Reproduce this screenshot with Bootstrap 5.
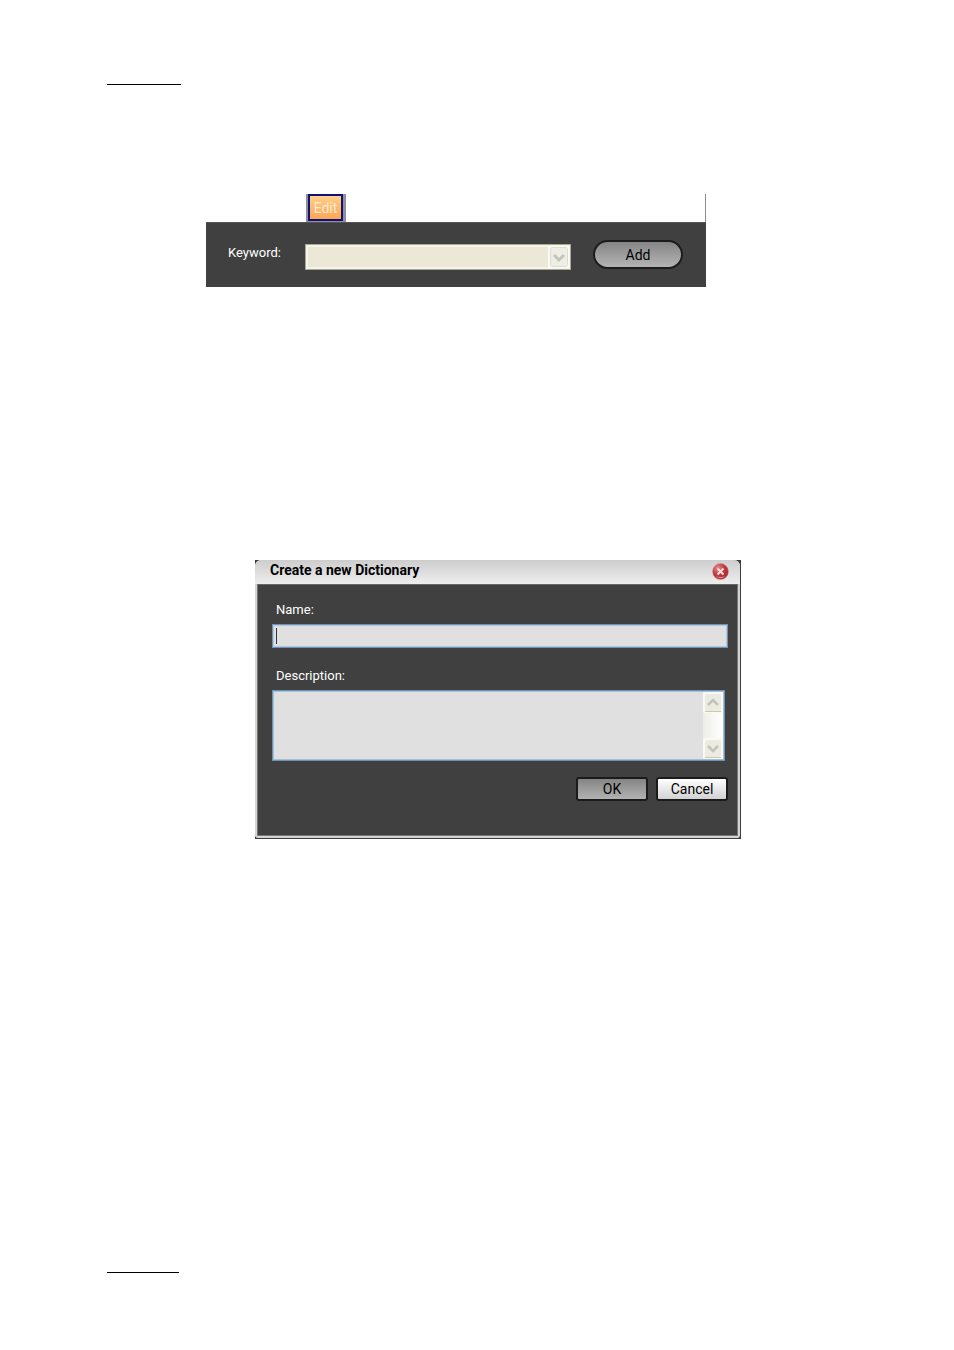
<!DOCTYPE html>
<html lang="en">
<head>
<meta charset="utf-8">
<meta name="viewport" content="width=device-width, initial-scale=1">
<title>Create a new Dictionary</title>
<link href="https://cdn.jsdelivr.net/npm/bootstrap@5.3.0/dist/css/bootstrap.min.css" rel="stylesheet">
<style>
body { background: #fff; color: #000; font-family: Roboto, "Liberation Sans", sans-serif; font-size: 13px; line-height: 16px; }
.sheet { padding: 84px 107px 77px; }
.rule { height: 1px; background: #000; }
.rule-top { width: 74px; }
.rule-bottom { width: 72px; }

/* keyword strip */
.keyword-panel { max-width: 500px; margin: 109px 0 0 99px; }
.strip { height: 28px; padding-left: 100px; border-right: 1px solid #8c8c8c; }
.edit-cell { width: 40px; border: solid #8e9199; border-width: 0 3px 1px 2px; }
.edit-btn { border: 2px solid #10107c; background: linear-gradient(#ffd08c, #ffa552); color: #fbe9d6; font-size: 14px; line-height: 16px; }
.keyword-bar { height: 65px; padding: 17px 23px 0 22px; background: #404040; border-top: 1px solid #555; }
.keyword-label { width: 77px; padding-top: 5px; color: #fff; }
.keyword-select { margin-top: 4px; height: 26px; }
.keyword-select select { appearance: none; border: 1px solid #a9aa95; background: #ebe8d7; box-shadow: inset 0 0 0 2px #f6f4ea; opacity: 1; }
.combo-arrow { top: 2px; right: 1px; width: 22px; height: 22px; }
.add-btn { width: 90px; height: 29px; margin-left: 22px; border: 2px solid #1c1c1c; border-radius: 15px; background: linear-gradient(#858585, #b4b4b4); font-size: 14px; }

/* dialog */
.dialog-frame { max-width: 486px; margin: 273px 0 0 148px; background: #3c3c3c; padding: 0 1px 1px 0; }
.dialog-box { border-radius: 6px 6px 3px 3px; background: #d4d4d4; padding: 0 2px 2px; }
.title-bar { height: 24px; margin: 0 -2px; padding: 2px 11px 0 15px; border-radius: 6px 6px 0 0; background: linear-gradient(#cdcdcd, #eee); }
.title-text { font-size: 14px; line-height: 17px; font-weight: 700; }
.close-btn { width: 17px; height: 17px; margin-top: 1px; }
.dialog-content { padding: 17px 9px 34px 14px; background: #404040; border: 1px solid #777; border-top-color: #666; }
.field-label { padding-left: 4px; margin-bottom: 6px; color: #fff; line-height: 16px; }
.name-input { height: 24px; padding: 2px 8px; border: 1px solid #6f93b5; outline: 0; background: #e0e0e0; box-shadow: inset 0 0 0 1px #b3c8dc; }
.text-caret { left: 4px; top: 4px; width: 1px; height: 16px; background: #333; }
.desc-label { margin-top: 20px; }
.desc-wrap { height: 71px; margin-right: 3px; padding: 1px; border: 1px solid #6f93b5; background: #e0e0e0; box-shadow: inset 0 0 0 1px #a4bfd9; }
.desc-wrap textarea { resize: none; outline: 0; overflow: hidden; }
.scroll-track { width: 20px; background: linear-gradient(90deg, #eeeee6, #fff); }
.scroll-btn { width: 20px; height: 21px; }
.dialog-btn { width: 72px; height: 24px; border: 2px solid #1b1b1b; border-radius: 3px; font-size: 14px; line-height: 16px; }
.ok-btn { background: linear-gradient(#858585, #b2b2b2); }
.cancel-btn { background: linear-gradient(#fff, #d2d2d2); }
</style>
</head>
<body>
<div class="sheet d-flex flex-column min-vh-100">
  <div class="rule rule-top"></div>

  <section class="keyword-panel">
    <div class="strip d-flex">
      <div class="edit-cell d-flex">
        <button type="button" class="edit-btn w-100 p-0">Edit</button>
      </div>
    </div>
    <div class="keyword-bar d-flex align-items-start">
      <label class="keyword-label" for="keyword">Keyword:</label>
      <div class="keyword-select position-relative flex-grow-1">
        <select id="keyword" class="w-100 h-100 rounded-0" disabled></select>
        <svg class="combo-arrow position-absolute pe-none" viewBox="0 0 22 22" aria-hidden="true">
          <rect width="22" height="22" fill="#faf9f3"/>
          <rect x="2.500" y="1.500" width="17" height="19" rx="2" fill="#efeee6" stroke="#dddccf"/>
          <path d="M6 9l5 5l5-5" fill="none" stroke="#c5c5ba" stroke-width="3"/>
        </svg>
      </div>
      <button type="button" class="add-btn p-0">Add</button>
    </div>
  </section>

  <section class="dialog-frame" role="dialog" aria-labelledby="dialog-title">
    <div class="dialog-box">
      <div class="title-bar d-flex justify-content-between align-items-start">
        <h1 id="dialog-title" class="title-text m-0">Create a new Dictionary</h1>
        <button type="button" class="close-btn border-0 bg-transparent p-0 d-flex" aria-label="Close">
          <svg width="17" height="17" viewBox="0 0 17 17" aria-hidden="true">
            <defs><radialGradient id="red" cx=".35" cy=".3" r=".75"><stop offset="0" stop-color="#e58f8f"/><stop offset=".5" stop-color="#c23a40"/><stop offset="1" stop-color="#a3262d"/></radialGradient></defs>
            <circle cx="8.500" cy="8.500" r="8" fill="url(#red)" stroke="#cf9c9c" stroke-width=".6"/>
            <path d="M3.500 12.500a7 5 0 0 0 10 0a6 6 0 0 1-10 0z" fill="#e08a8a"/>
            <path d="M5.500 5.500l6 6M11.500 5.500l-6 6" stroke="#f6dede" stroke-width="2"/>
          </svg>
        </button>
      </div>
      <form class="dialog-content">
        <label class="field-label d-block" for="dict-name">Name:</label>
        <div class="position-relative">
          <input id="dict-name" type="text" class="name-input d-block w-100 rounded-0">
          <span class="text-caret position-absolute"></span>
        </div>
        <label class="field-label desc-label d-block" for="dict-desc">Description:</label>
        <div class="desc-wrap d-flex">
          <textarea id="dict-desc" class="flex-grow-1 border-0 bg-transparent p-1"></textarea>
          <div class="scroll-track d-flex flex-column justify-content-between">
            <button type="button" class="scroll-btn border-0 bg-transparent p-0 d-flex" aria-label="Scroll up">
              <svg width="20" height="21" viewBox="0 0 20 21" aria-hidden="true"><rect width="20" height="21" rx="2" fill="#fafaf4"/><rect x="2" y="2" width="16" height="17" rx="2" fill="#ebebe2"/><path d="M2 19.500h16" stroke="#c9c9b2"/><path d="M5 13l5-5l5 5" fill="none" stroke="#c3c3ba" stroke-width="2.600"/></svg>
            </button>
            <button type="button" class="scroll-btn border-0 bg-transparent p-0 d-flex" aria-label="Scroll down">
              <svg width="20" height="21" viewBox="0 0 20 21" aria-hidden="true"><rect width="20" height="21" rx="2" fill="#fafaf4"/><rect x="2" y="2" width="16" height="17" rx="2" fill="#ebebe2"/><path d="M2 19.500h16" stroke="#c9c9b2"/><path d="M5 8l5 5l5-5" fill="none" stroke="#c3c3ba" stroke-width="2.600"/></svg>
            </button>
          </div>
        </div>
        <div class="d-flex justify-content-end gap-2 mt-3">
          <button type="button" class="dialog-btn ok-btn p-0">OK</button>
          <button type="button" class="dialog-btn cancel-btn p-0">Cancel</button>
        </div>
      </form>
    </div>
  </section>

  <div class="rule rule-bottom mt-auto"></div>
</div>
<script src="https://cdn.jsdelivr.net/npm/bootstrap@5.3.0/dist/js/bootstrap.bundle.min.js"></script>
</body>
</html>
